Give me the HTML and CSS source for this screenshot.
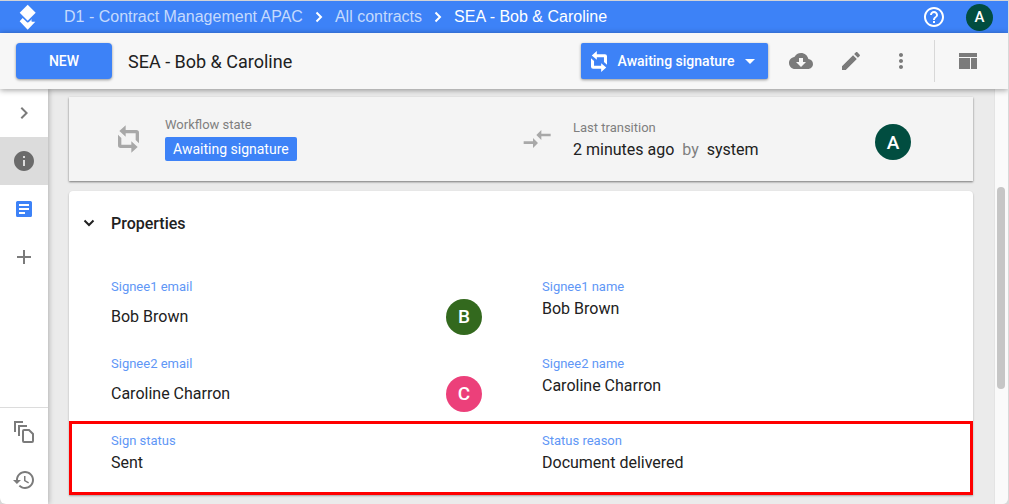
FILE: index.html
```html
<!DOCTYPE html>
<html lang="en">
<head>
    <meta charset="UTF-8">
    <title>SEA - Bob &amp; Caroline</title>
    <link rel="stylesheet" href="styles.css">
</head>
<body>
    <!-- Breadcrumb bar -->
    <header class="topbar">
        <a href="#" class="logo" aria-label="Home">
            <svg width="17" height="26" viewBox="0 0 51 78"><path d="M26 2 50 26 26 50 2 26Z"/><path d="M2 52 11 42 24 55Q27 57 32 52L39 45Q35 53 40 53H49L26 77Z"/></svg>
        </a>
        <nav class="breadcrumb">
            <a href="#">D1 - Contract Management APAC</a>
            <svg width="8" height="12" viewBox="0 0 8 12"><path d="M1.500 1.500 6 6 1.500 10.500"/></svg>
            <a href="#">All contracts</a>
            <svg width="8" height="12" viewBox="0 0 8 12"><path d="M1.500 1.500 6 6 1.500 10.500"/></svg>
            <a href="#" class="current">SEA - Bob &amp; Caroline</a>
        </nav>
        <button class="help" aria-label="Help">
            <svg width="24" height="24" viewBox="0 0 24 24"><path d="M11 18h2v-2h-2v2zm1-16C6.480 2 2 6.480 2 12s4.480 10 10 10 10-4.480 10-10S17.520 2 12 2zm0 18c-4.410 0-8-3.590-8-8s3.590-8 8-8 8 3.590 8 8-3.590 8-8 8zm0-14c-2.210 0-4 1.790-4 4h2c0-1.100.9-2 2-2s2 .9 2 2c0 2-3 1.750-3 5h2c0-2.250 3-2.500 3-5 0-2.210-1.790-4-4-4z"/></svg>
        </button>
        <button class="avatar small teal">A</button>
    </header>

    <!-- Object toolbar -->
    <div class="toolbar">
        <button class="btn">NEW</button>
        <h1>SEA - Bob &amp; Caroline</h1>
        <button class="btn state-btn">
            <svg width="16" height="21" viewBox="0 0 63 82"><path d="M3 17 23 0V12H55q8 0 8 8V54L51 43V24H23V34Z"/><path d="M60 65 40 82V70H8q-8 0-8-8V28L12 39V58H40V48Z"/></svg>
            <span>Awaiting signature</span>
            <svg width="10" height="5" viewBox="0 0 10 5"><path d="M0 0h10L5 5z"/></svg>
        </button>
        <div class="actions">
            <button class="icon-btn" aria-label="Download">
                <svg width="24" height="24" viewBox="0 0 24 24"><path d="M19.350 10.040C18.670 6.590 15.640 4 12 4 9.110 4 6.600 5.640 5.350 8.040 2.340 8.360 0 10.910 0 14c0 3.310 2.690 6 6 6h13c2.760 0 5-2.240 5-5 0-2.640-2.050-4.780-4.650-4.960zM17 13l-5 5-5-5h3V9h4v4h3z"/></svg>
            </button>
            <button class="icon-btn" aria-label="Edit">
                <svg width="24" height="24" viewBox="0 0 24 24"><path d="M3 17.250V21h3.750L17.810 9.940l-3.750-3.750L3 17.250zM20.710 7.040c.39-.39.39-1.020 0-1.410l-2.340-2.340c-.39-.39-1.020-.39-1.410 0l-1.830 1.830 3.750 3.750 1.830-1.830z"/></svg>
            </button>
            <button class="icon-btn" aria-label="More">
                <svg width="24" height="24" viewBox="0 0 24 24"><path d="M12 8c1.100 0 2-.9 2-2s-.9-2-2-2-2 .9-2 2 .9 2 2 2zm0 2c-1.100 0-2 .9-2 2s.9 2 2 2 2-.9 2-2-.9-2-2-2zm0 6c-1.100 0-2 .9-2 2s.9 2 2 2 2-.9 2-2-.9-2-2-2z"/></svg>
            </button>
        </div>
        <div class="layout-switch">
            <button class="icon-btn" aria-label="Layout">
                <svg width="18" height="16" viewBox="0 0 18 16"><path d="M0 0h18v4H0zM0 5h11v11H0zM12 5h6v11h-6z"/></svg>
            </button>
        </div>
    </div>

    <div class="page">
        <!-- Side tabs -->
        <nav class="sidebar">
            <button aria-label="Expand">
                <svg width="24" height="24" viewBox="0 0 24 24"><path d="M8.590 16.590 13.170 12 8.590 7.410 10 6l6 6-6 6z"/></svg>
            </button>
            <button class="active" aria-label="Info">
                <svg width="24" height="24" viewBox="0 0 24 24"><path d="M12 2C6.480 2 2 6.480 2 12s4.480 10 10 10 10-4.480 10-10S17.520 2 12 2zm1 15h-2v-6h2v6zm0-8h-2V7h2v2z"/></svg>
            </button>
            <button class="blue" aria-label="Document">
                <svg width="16" height="16" viewBox="0 0 16 16"><path fill-rule="evenodd" d="M1.500 0h13A1.500 1.500 0 0 1 16 1.500v13a1.500 1.500 0 0 1-1.500 1.500h-13A1.500 1.500 0 0 1 0 14.500v-13A1.500 1.500 0 0 1 1.500 0zM3 3v2h10V3zM3 7v2h10V7zM3 11v2h6v-2z"/></svg>
            </button>
            <button aria-label="Add">
                <svg width="24" height="24" viewBox="0 0 24 24"><path d="M19 13h-6v6h-2v-6H5v-2h6V5h2v6h6z"/></svg>
            </button>
            <div class="sidebar-bottom">
                <button aria-label="Copies">
                    <svg class="line" width="20" height="22" viewBox="0 0 20 22"><path d="M1 11V1h8M5 15V5h8M10 9h5l4 4v7q0 1-1 1h-8q-1 0-1-1V10q0-1 1-1z"/></svg>
                </button>
                <button aria-label="History">
                    <svg width="24" height="24" viewBox="0 0 24 24"><path d="M13 3c-4.970 0-9 4.030-9 9H1l3.890 3.890.07.14L9 12H6c0-3.870 3.130-7 7-7s7 3.130 7 7-3.130 7-7 7c-1.930 0-3.680-.79-4.940-2.060l-1.420 1.420C8.270 19.990 10.510 21 13 21c4.970 0 9-4.030 9-9s-4.030-9-9-9zm-1 5v5l4.280 2.540.72-1.210-3.500-2.080V8H12z"/></svg>
                </button>
            </div>
        </nav>

        <main class="content">
            <section class="card workflow">
                <div class="wf-cell">
                    <svg class="wf-icon" width="28" height="28" viewBox="-9 -1 84 84"><path d="M4 17 23 0V14H55q8 0 8 8V54L53 44V24H23V34Z"/><path d="M59 65 40 82V68H8q-8 0-8-8V28L10 38V58H40V48Z"/></svg>
                    <div>
                        <div class="wf-label">Workflow state</div>
                        <div class="badge">Awaiting signature</div>
                    </div>
                </div>
                <div class="wf-cell">
                    <svg class="wf-icon" width="28" height="18" viewBox="-2 0 84 54"><path d="M0 34H28V24L43 39 28 54V42H0ZM81 11H53V0L38 15 53 30V19H81Z"/></svg>
                    <div class="transition">
                        <div class="wf-label">Last transition</div>
                        <div class="wf-value">2 minutes ago <span class="by">by</span> system</div>
                    </div>
                    <span class="avatar teal">A</span>
                </div>
            </section>

            <section class="card properties">
                <button class="section-toggle">
                    <svg width="12" height="8" viewBox="0 0 12 8"><path d="M1.500 1.500 6 6 10.500 1.500"/></svg>
                    <span>Properties</span>
                </button>
                <dl class="row">
                    <div class="field">
                        <dt>Signee1 email</dt>
                        <dd class="person">Bob Brown <span class="avatar green">B</span></dd>
                    </div>
                    <div class="field">
                        <dt>Signee1 name</dt>
                        <dd>Bob Brown</dd>
                    </div>
                </dl>
                <dl class="row">
                    <div class="field">
                        <dt>Signee2 email</dt>
                        <dd class="person">Caroline Charron <span class="avatar pink">C</span></dd>
                    </div>
                    <div class="field">
                        <dt>Signee2 name</dt>
                        <dd>Caroline Charron</dd>
                    </div>
                </dl>
                <dl class="row highlight">
                    <div class="field">
                        <dt>Sign status</dt>
                        <dd>Sent</dd>
                    </div>
                    <div class="field">
                        <dt>Status reason</dt>
                        <dd>Document delivered</dd>
                    </div>
                </dl>
            </section>
        </main>
        <div class="scroll-track"><div class="scroll-thumb"></div></div>
    </div>
</body>
</html>
```
FILE: styles.css
```css
* { box-sizing: border-box; }
body {
    margin: 0;
    height: 100vh;
    display: flex;
    flex-direction: column;
    overflow: hidden;
    border-top: 1px solid #d2d3d6;
    border-right: 1px solid #d8d8d8;
    border-radius: 0 0 6px 6px;
    background: #ebebeb;
    font-family: Roboto, sans-serif;
    font-size: 16px;
    color: #212121;
}
html { background: #d8d8d8; }
button { font-family: inherit; border: none; padding: 0; background: none; cursor: pointer; }
svg { display: block; flex: none; fill: currentColor; }

/* top bar */
.topbar {
    display: flex;
    align-items: center;
    flex: none;
    height: 32px;
    padding: 0 15px 0 19px;
    background: #3d82f7;
    color: #fff;
}
.logo { color: #fff; margin-right: 28px; }
.breadcrumb {
    display: flex;
    align-items: center;
    gap: 12px;
    flex: 1;
    font-family: "Liberation Sans", Arial, sans-serif;
    font-size: 16px;
    line-height: 20px;
    white-space: nowrap;
}
.breadcrumb a { color: #c5dafd; text-decoration: none; }
.breadcrumb a.current { color: #fff; }
.breadcrumb svg, .section-toggle svg { fill: none; stroke: currentColor; stroke-width: 2; }
.help { color: #fff; margin-right: 20px; }

.avatar {
    display: flex;
    align-items: center;
    justify-content: center;
    flex: none;
    width: 36px;
    height: 36px;
    border-radius: 50%;
    color: #fff;
    font-size: 19px;
    font-weight: 500;
}
.avatar.small { width: 27px; height: 27px; font-size: 15px; }
.teal { background: #014d40; }
.green { background: #33691e; }
.pink { background: #ec407a; }

/* toolbar */
.toolbar {
    position: relative;
    z-index: 2;
    display: flex;
    align-items: center;
    flex: none;
    height: 56px;
    padding: 0 15px 0 16px;
    background: #f7f7f7;
    box-shadow: 0 1px 6px rgba(0, 0, 0, 0.4);
}
.toolbar h1 { flex: 1; margin: 0 16px; font-size: 18px; font-weight: 400; }
.btn {
    min-width: 96px;
    height: 36px;
    border-radius: 4px;
    background: #3d82f7;
    color: #fff;
    font-size: 14px;
    font-weight: 500;
    box-shadow: 0 1px 3px rgba(0, 0, 0, 0.4);
}
.state-btn {
    display: flex;
    align-items: center;
    justify-content: space-between;
    min-width: 187px;
    padding: 0 13px 0 10px;
    border-radius: 2px;
}
.actions { display: flex; margin: 0 8px; }
.icon-btn {
    display: flex;
    align-items: center;
    justify-content: center;
    width: 50px;
    height: 42px;
    color: #7b7b7b;
}
.layout-switch { border-left: 1px solid #d8d8d8; padding-left: 8px; }

.page { display: flex; flex: 1; min-height: 0; }

/* sidebar */
.sidebar {
    position: relative;
    z-index: 1;
    display: flex;
    flex-direction: column;
    flex: none;
    width: 48px;
    background: #fff;
    box-shadow: 1px 0 5px rgba(0, 0, 0, 0.25);
}
.sidebar button {
    display: flex;
    align-items: center;
    justify-content: center;
    width: 100%;
    height: 48px;
    color: #7b7b7b;
}
.sidebar button.active { background: #dcdcdc; color: #6b6b6b; }
.sidebar button.blue { color: #3d82f7; }
.sidebar .line { fill: none; stroke: currentColor; stroke-width: 2; }
.sidebar-bottom { margin-top: auto; border-top: 1px solid #dcdcdc; }

/* content */
.content { flex: 1; min-width: 0; padding: 8px 21px; overflow: hidden; }
.card { background: #fff; box-shadow: 0 1px 2px rgba(0, 0, 0, 0.3); }

.workflow {
    display: grid;
    grid-template-columns: 1fr 1fr;
    align-items: center;
    height: 84px;
    margin-bottom: 10px;
    padding: 0 42px 0 46px;
    background: #f4f4f4;
    box-shadow: 0 1px 2px rgba(0, 0, 0, 0.5);
}
.wf-cell { display: flex; align-items: center; }
.wf-icon { margin-right: 22px; color: #a8a8a8; }
.wf-label { font-size: 13px; line-height: 16px; color: #7f7f7f; }
.badge {
    margin-top: 4px;
    padding: 0 8px;
    border-radius: 2px;
    background: #3d82f7;
    color: #fff;
    font-size: 14px;
    line-height: 24px;
}
.transition { flex: 1; padding-top: 4px; }
.wf-value { margin-top: 2px; line-height: 24px; }
.by { margin: 0 4px; color: #7f7f7f; }
.wf-cell .avatar { margin: 6px 20px 0 0; }

/* properties */
.properties { border-radius: 4px 4px 0 0; }
.section-toggle {
    display: flex;
    align-items: center;
    gap: 16px;
    width: 100%;
    height: 64px;
    margin-bottom: 12px;
    padding-left: 14px;
    color: #212121;
    font-size: 16px;
    font-weight: 500;
}
.row {
    display: grid;
    grid-template-columns: 1fr 1fr;
    min-height: 77px;
    margin: 0;
    padding: 12px 0 0 42px;
}
.row.highlight { min-height: 74px; outline: 3px solid #f00; outline-offset: -3px; }
dt { font-size: 13px; line-height: 16px; color: #5f97f6; }
dd { margin: 2px 0 0; line-height: 24px; }
.person {
    display: flex;
    align-items: center;
    justify-content: space-between;
    margin-top: 4px;
    padding-right: 60px;
}

/* scrollbar */
.scroll-track { flex: none; width: 14px; padding: 98px 3px 0 2px; background: #fafafa; border-left: 1px solid #e4e4e4; }
.scroll-thumb { height: 202px; border-radius: 4px; background: #c6c6c6; }
```
